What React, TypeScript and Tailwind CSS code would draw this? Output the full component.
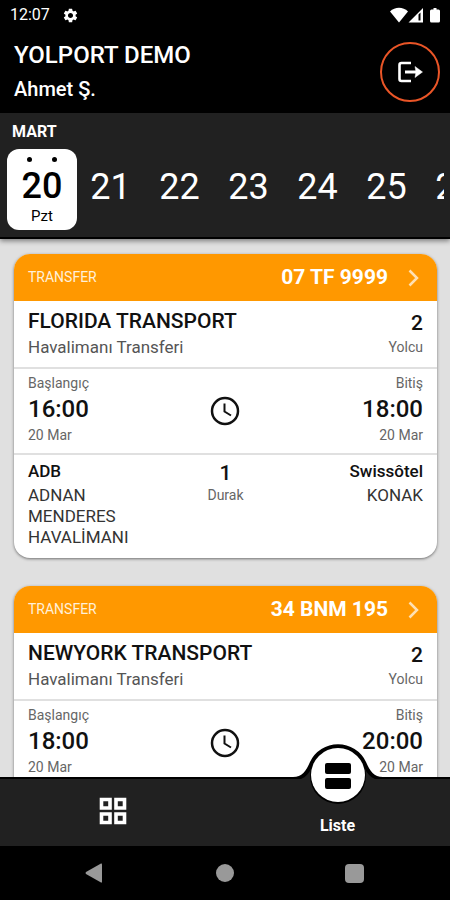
import { MdSettings } from "react-icons/md";

type Transfer = {
  plate: string;
  company: string;
  passengers: number;
  start: string;
  end: string;
};

const transfers: Transfer[] = [
  {
    plate: "07 TF 9999",
    company: "FLORIDA TRANSPORT",
    passengers: 2,
    start: "16:00",
    end: "18:00",
  },
  {
    plate: "34 BNM 195",
    company: "NEWYORK TRANSPORT",
    passengers: 2,
    start: "18:00",
    end: "20:00",
  },
];

const days = [21, 22, 23, 24, 25, 26];

function StatusBar() {
  return (
    <div className="flex h-[30px] items-center justify-between bg-black pr-2 pl-[10px] text-white">
      <div className="flex items-center gap-3">
        <span className="text-[16px]">12:07</span>
        <MdSettings size={17} />
      </div>
      <svg width="52" height="16" viewBox="0 0 52 16" fill="currentColor">
        <path d="M0 4.5C5 -0.5 13 -0.5 18 4.5L9 15.5Z" />
        <path d="M33 1V15.500H18.500ZM30.500 5.500L28.500 7.500V13.500H30.500Z" fillRule="evenodd" />
        <path d="M43.500 1h3v1.500h2a1.500 1.500 0 0 1 1.500 1.500V14a1.500 1.500 0 0 1-1.500 1.500h-7a1.500 1.500 0 0 1-1.500-1.500V4a1.500 1.500 0 0 1 1.500-1.500h2Z" />
      </svg>
    </div>
  );
}

function Header() {
  return (
    <header className="flex items-center justify-between bg-black pr-[10px] pl-[14px] text-white">
      <div className="pt-[9px] pb-[10px] font-medium">
        <h1 className="text-[24px] leading-8">YOLPORT DEMO</h1>
        <p className="pt-1 text-[20px] leading-7">Ahmet Ş.</p>
      </div>
      <button
        aria-label="Çıkış"
        className="flex size-[60px] items-center justify-center rounded-full border-2 border-[#ea5527]"
      >
        <svg width="26" height="22" viewBox="0 0 26 22" fill="none" stroke="currentColor">
          <path d="M14 2H4.500Q2.500 2 2.500 4V18Q2.500 20 4.500 20H14" strokeWidth="2.600" />
          <path d="M8 11H23" strokeWidth="3" />
          <path d="M18 5.500L25.500 11L18 16.500L19 11Z" fill="currentColor" strokeWidth="0.500" />
        </svg>
      </button>
    </header>
  );
}

function DayStrip() {
  return (
    <section className="relative z-10 border-b-2 border-black bg-[#212121] pt-[7px] pr-[6px] pb-[7px] pl-[7px] text-white shadow-[0_2px_5px_rgba(0,0,0,0.45)]">
      <h2 className="pl-[5px] text-[16px] leading-6 font-bold">MART</h2>
      <div className="flex overflow-hidden pt-[5px]">
        <button className="flex h-[81px] w-[70px] shrink-0 flex-col items-center rounded-xl bg-white text-black">
          <span className="flex gap-5 pt-2">
            <span className="size-[5px] rounded-full bg-black" />
            <span className="size-[5px] rounded-full bg-black" />
          </span>
          <span className="pt-1 text-[36px] leading-10 font-medium">20</span>
          <span className="text-[15px] leading-5">Pzt</span>
        </button>
        {days.map((day) => (
          <button
            key={day}
            className="flex w-[69px] shrink-0 items-center justify-center pr-[2px] pb-[6px] text-[36px] leading-10"
          >
            {day}
          </button>
        ))}
      </div>
    </section>
  );
}

function Clock() {
  return (
    <svg width="30" height="30" viewBox="0 0 30 30" fill="none" stroke="#111">
      <circle cx="15" cy="15" r="13" strokeWidth="2.500" />
      <path d="M14.500 7.500V15.500L21 19.500" strokeWidth="2" />
    </svg>
  );
}

function TransferCard({ transfer }: { transfer: Transfer }) {
  return (
    <article className="overflow-hidden rounded-2xl bg-white text-[#111] shadow-[0_1px_3px_rgba(0,0,0,0.5)]">
      <a
        href="#detay"
        className="flex h-[47px] items-center justify-between bg-[#ff9800] pr-[18px] pl-[14px] text-white"
      >
        <span className="text-[14px] text-[#fff0da]">TRANSFER</span>
        <span className="flex items-center gap-5">
          <span className="text-[21px] font-bold">{transfer.plate}</span>
          <svg width="11" height="18" viewBox="0 0 11 18" fill="none" stroke="#ffe0b2">
            <path d="M1.500 1.500L9 9L1.500 16.500" strokeWidth="2.500" />
          </svg>
        </span>
      </a>

      <div className="flex justify-between border-b-2 border-[#e0e0e0] px-[14px] pt-2 pb-[6px]">
        <div>
          <h3 className="text-[21px] leading-6 font-medium">{transfer.company}</h3>
          <p className="text-[17px] leading-7 text-[#555]">Havalimanı Transferi</p>
        </div>
        <div className="text-right">
          <p className="text-[21px] leading-7 font-medium">{transfer.passengers}</p>
          <p className="text-[14px] leading-5 text-[#666]">Yolcu</p>
        </div>
      </div>

      <div className="grid grid-cols-3 items-center border-b-2 border-[#e0e0e0] px-[14px] pt-1 pb-2">
        <div>
          <p className="text-[14px] leading-5 text-[#666]">Başlangıç</p>
          <p className="text-[24px] leading-8 font-medium">{transfer.start}</p>
          <p className="text-[14px] leading-5 text-[#666]">20 Mar</p>
        </div>
        <div className="flex justify-center pt-1">
          <Clock />
        </div>
        <div className="text-right">
          <p className="text-[14px] leading-5 text-[#666]">Bitiş</p>
          <p className="text-[24px] leading-8 font-medium">{transfer.end}</p>
          <p className="text-[14px] leading-5 text-[#666]">20 Mar</p>
        </div>
      </div>

      <div className="grid grid-cols-3 px-[14px] pt-[6px] pb-[10px]">
        <div>
          <p className="text-[17px] leading-5 font-medium">ADB</p>
          <p className="w-28 pt-1 text-[17px] leading-[21px] text-[#333]">
            ADNAN MENDERES HAVALİMANI
          </p>
        </div>
        <div className="text-center">
          <p className="text-[21px] leading-6 font-medium">1</p>
          <p className="text-[14px] leading-5 text-[#666]">Durak</p>
        </div>
        <div className="text-right">
          <p className="text-[17px] leading-5 font-medium">Swissôtel</p>
          <p className="pt-1 text-[17px] leading-[21px] text-[#333]">KONAK</p>
        </div>
      </div>
    </article>
  );
}

function TabBar() {
  return (
    <nav className="relative z-10 flex h-[69px] shrink-0 border-t-2 border-black bg-[#212121] text-white">
      <button aria-label="Panel" className="flex flex-1 items-center justify-center pb-1">
        <svg width="28" height="28" viewBox="0 0 28 28" fill="none" stroke="currentColor">
          <path
            d="M2.500 2.500h8.500v8.500h-8.500ZM17 2.500h8.500v8.500h-8.500ZM2.500 17h8.500v8.500h-8.500ZM17 17h8.500v8.500h-8.500Z"
            strokeWidth="3.600"
          />
        </svg>
      </button>
      <button className="relative flex flex-1 flex-col items-center justify-end pb-2">
        <svg
          className="absolute -top-9 left-1/2 -translate-x-1/2"
          width="90"
          height="66"
          viewBox="0 0 90 66"
        >
          <path
            d="M0 34C9 34 13 28 17 19A31 31 0 0 1 73 19C77 28 81 34 90 34V36H0Z"
            fill="#000"
          />
          <path d="M8 36C13 34 16 30 18 26H72C74 30 77 34 82 36Z" fill="#212121" />
          <circle cx="45" cy="33" r="28" fill="#000" />
          <circle cx="45" cy="32" r="27" fill="#fff" />
          <rect x="32" y="20" width="26" height="11" rx="2" fill="#000" />
          <rect x="32" y="35" width="26" height="11" rx="2" fill="#000" />
        </svg>
        <span className="text-[16px] leading-6 font-bold">Liste</span>
      </button>
    </nav>
  );
}

function SystemBar() {
  return (
    <div className="grid h-[54px] shrink-0 grid-cols-[1fr_20px_1fr] items-center bg-black text-[#999]">
      <button aria-label="Geri" className="justify-self-end pr-28">
        <svg width="18" height="20" viewBox="0 0 18 20" fill="currentColor">
          <path d="M16 0.500Q17 0 17 1.500V18.500Q17 20 16 19.500L1 11Q0 10 1 9Z" />
        </svg>
      </button>
      <button aria-label="Ana ekran" className="size-[18px] justify-self-center rounded-full bg-[#999]" />
      <button aria-label="Son uygulamalar" className="ml-[110px] size-[19px] rounded-sm bg-[#999]" />
    </div>
  );
}

export default function App() {
  return (
    <div className="flex h-screen flex-col bg-[#e0e0e0] font-[Roboto,sans-serif]">
      <StatusBar />
      <Header />
      <DayStrip />
      <main className="flex min-h-0 flex-1 flex-col gap-7 overflow-y-auto pt-[15px] pr-[13px] pb-10 pl-[14px] [scrollbar-width:none] *:shrink-0">
        {transfers.map((transfer) => (
          <TransferCard key={transfer.plate} transfer={transfer} />
        ))}
      </main>
      <TabBar />
      <SystemBar />
    </div>
  );
}
